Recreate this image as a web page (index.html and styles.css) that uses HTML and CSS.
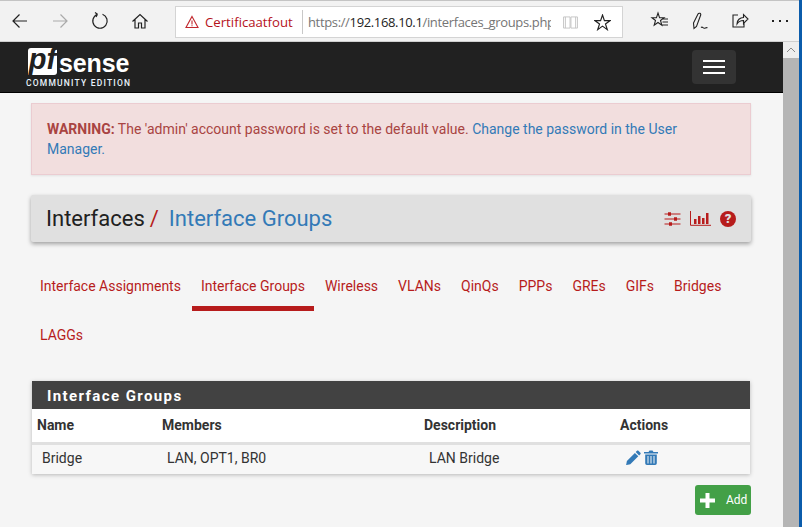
FILE: index.html
```html
<!DOCTYPE html>
<html lang="en">
<head>
  <meta charset="UTF-8" />
  <title>pfSense - Interfaces: Interface Groups</title>
  <link rel="stylesheet" href="styles.css">
</head>
<body>
  <div class="window">
    <div class="browser">
      <div class="toolbar">
        <div class="nav-icons">
          <svg class="tb-icon" viewBox="0 0 20 20"><path d="M17 10H3M9.500 3.500 3 10l6.500 6.500" fill="none" stroke="#222" stroke-width="1.200"/></svg>
          <svg class="tb-icon" viewBox="0 0 20 20"><path d="M3 10h14M10.500 3.500 17 10l-6.500 6.500" fill="none" stroke="#aaa" stroke-width="1.200"/></svg>
          <svg class="tb-icon" viewBox="0 0 20 20"><path d="M12.500 3.300a7.200 7.200 0 1 1-5 0M7.500 3.300 5 1.500M7.500 3.300 6 6" fill="none" stroke="#222" stroke-width="1.200"/></svg>
          <svg class="tb-icon" viewBox="0 0 20 20"><path d="M2.500 10.500 10 3.500l7.500 7M5 8.500V17h3.500v-5h3v5H15V8.500" fill="none" stroke="#222" stroke-width="1.200"/></svg>
        </div>
        <div class="address">
          <div class="cert">
            <svg class="cert-icon" viewBox="0 0 14 14"><path d="M7 1.500 13 12.500H1ZM7 5.500v4M7 10.300v1" fill="none" stroke="#c1272d" stroke-width="1.100"/></svg>
            <span>Certificaatfout</span>
          </div>
          <div class="url"><span class="url-dim">https://</span>192.168.10.1<span class="url-dim">/interfaces_groups.php</span></div>
          <svg class="book" viewBox="0 0 16 14"><path d="M.5 1h7v12h-7ZM8.500 1h7v12h-7ZM2.500 1v12M13.500 1v12" fill="none" stroke="#c4c4c4"/></svg>
          <svg class="star" viewBox="0 0 16 16"><path d="m8 1 1.800 5.200h5.400l-4.400 3.200 1.700 5.300L8 11.400l-4.500 3.300 1.700-5.300L.8 6.200h5.400Z" fill="none" stroke="#222" stroke-width="1.100"/></svg>
        </div>
        <div class="tool-icons">
          <svg class="tb-icon" viewBox="0 0 20 20"><path d="m8 2 1.600 4.800H14l-3.500 2.700 1.300 4.700L8 11.500l-3.800 2.700 1.300-4.700L2 6.800h4.400ZM12 8h6M12.500 11h5.500M12 14h6" fill="none" stroke="#222" stroke-width="1.100"/></svg>
          <svg class="tb-icon" viewBox="0 0 20 20"><path d="M3.500 12 8 3c.8-1.500 3.300-.6 2.700 1L6.500 15.500l-2.500 2ZM11 16.500c1.500-1.500 2 .8 3.200.8s1.500-1 3.300-.6" fill="none" stroke="#222" stroke-width="1.100"/></svg>
          <svg class="tb-icon" viewBox="0 0 20 20"><path d="M8 4H3v12h11v-4M7 13c0-4 3-6.500 6.500-6.500V3.500L18 8l-4.500 4.500v-3C11 9.500 8.500 10.500 7 13Z" fill="none" stroke="#222" stroke-width="1.100"/></svg>
          <div class="more"><i></i><i></i><i></i></div>
        </div>
      </div>
    </div>

    <div class="viewport">
      <div class="page">
        <nav class="navbar">
          <div class="logo">
            <div class="logo-top">
              <span class="logo-pf">pf</span><span class="logo-sense">sense</span>
            </div>
            <div class="logo-sub">COMMUNITY EDITION</div>
          </div>
          <button class="burger"><i></i><i></i><i></i></button>
        </nav>

        <main class="content">
          <div class="alert">
            <strong>WARNING:</strong> The 'admin' account password is set to the default value. <a href="#">Change the password in the User Manager.</a>
          </div>

          <div class="crumbs">
            <h1><span class="crumb-root">Interfaces</span><span class="crumb-sep">/</span><a href="#">Interface Groups</a></h1>
            <div class="crumb-icons">
              <svg class="ci-sliders" viewBox="0 0 16 14"><path d="M0 2h16M0 7h16M0 12h16" stroke="#b71c1c" stroke-width="1.200"/><path d="M3.500 .3h3v3.400h-3ZM9.500 5.300h3v3.400h-3ZM4.500 10.300h3v3.400h-3Z" fill="#b71c1c"/></svg>
              <svg class="ci-chart" viewBox="0 0 21 15"><path d="M.5 0v14.300H21" fill="none" stroke="#b71c1c"/><path d="M4 8h2.500v5H4ZM8 5h2.500v8H8ZM12 7h2.500v6H12ZM16 2h2.500v11H16Z" fill="#b71c1c"/></svg>
              <span class="ci-help">?</span>
            </div>
          </div>

          <ul class="tabs">
            <li><a href="#">Interface Assignments</a></li>
            <li class="active"><a href="#">Interface Groups</a></li>
            <li><a href="#">Wireless</a></li>
            <li><a href="#">VLANs</a></li>
            <li><a href="#">QinQs</a></li>
            <li><a href="#">PPPs</a></li>
            <li><a href="#">GREs</a></li>
            <li><a href="#">GIFs</a></li>
            <li><a href="#">Bridges</a></li>
            <li><a href="#">LAGGs</a></li>
          </ul>

          <section class="panel">
            <h2>Interface Groups</h2>
            <table>
              <thead>
                <tr><th class="col-name">Name</th><th class="col-members">Members</th><th class="col-desc">Description</th><th>Actions</th></tr>
              </thead>
              <tbody>
                <tr>
                  <td>Bridge</td>
                  <td>LAN, OPT1, BR0</td>
                  <td>LAN Bridge</td>
                  <td class="actions">
                    <svg class="act-icon" viewBox="0 0 15 15"><path d="M11 .8c.5-.4 1-.4 1.400 0l2 2c.4.400.4 1 0 1.400l-1.300 1.300-3.400-3.400ZM8.900 2.900l3.400 3.400-8 8-4.200.8.800-4.200Z" fill="#337ab7"/></svg>
                    <svg class="act-icon" viewBox="0 0 14 15"><path d="M4.500 2 5.500.5h3L9.500 2H14v1.500H0V2ZM1.200 4.500h11.600V13c0 1.200-.7 2-1.700 2H2.900c-1 0-1.700-.8-1.700-2ZM3.500 6v7.500h1V6ZM6.500 6v7.500h1V6ZM9.500 6v7.500h1V6Z" fill="#337ab7" fill-rule="evenodd"/></svg>
                  </td>
                </tr>
              </tbody>
            </table>
          </section>

          <div class="panel-foot">
            <button class="btn-add">
              <svg class="plus" viewBox="0 0 15 15"><path d="M5.500 0h4v5.500H15v4H9.500V15h-4V9.500H0v-4h5.500Z" fill="#fff"/></svg>
              Add
            </button>
          </div>
        </main>
      </div>

      <div class="scrollbar"><div class="scroll-up"><svg viewBox="0 0 10 6"><path d="M1 5 5 1l4 4" fill="none" stroke="#888"/></svg></div></div>
    </div>
  </div>
  <div class="desktop-edge"></div>
</body>
</html>
```

FILE: styles.css
```css
* { margin: 0; padding: 0; box-sizing: border-box; }

html, body { height: 100%; overflow: hidden; }

body {
  display: flex;
  font-family: 'Roboto', sans-serif;
  font-size: 14px;
  line-height: 20px;
  color: #212121;
  background: #0b5cab;
}

a { color: #337ab7; text-decoration: none; }

.window {
  width: 799px;
  height: 527px;
  display: flex;
  flex-direction: column;
  flex-shrink: 0;
}

.desktop-edge { flex: 1; background: #0b5cab; }

/* browser chrome */
.browser {
  height: 42px;
  background: #f2f2f2;
  border-top: 1px solid #c4c4c4;
  border-bottom: 1px solid #cfcfcf;
  flex-shrink: 0;
}

.toolbar {
  height: 40px;
  display: flex;
  align-items: center;
}

.nav-icons {
  width: 175px;
  padding-left: 10px;
  display: flex;
  gap: 20px;
  flex-shrink: 0;
}

.tb-icon { width: 20px; height: 20px; display: block; }

.address {
  width: 448px;
  height: 32px;
  margin-top: 2px;
  background: #fff;
  border: 1px solid #d4d4d4;
  display: flex;
  align-items: center;
  font-family: 'Open Sans', sans-serif;
  flex-shrink: 0;
}

.cert {
  height: 24px;
  width: 127px;
  padding-left: 9px;
  display: flex;
  align-items: center;
  gap: 6px;
  color: #b5121b;
  font-size: 13.200px;
  border-right: 1px solid #c8c8c8;
  flex-shrink: 0;
}

.cert-icon { width: 14px; height: 14px; }

.url {
  width: 243px;
  margin-left: 5px;
  overflow: hidden;
  white-space: nowrap;
  font-size: 13px;
  letter-spacing: -.35px;
  color: #222;
  flex-shrink: 0;
}

.url-dim { color: #757575; }

.book { width: 15px; height: 13px; margin-left: 12px; }
.star { width: 17px; height: 17px; margin-left: 16px; }

.tool-icons {
  padding-left: 27px;
  display: flex;
  align-items: center;
  gap: 20px;
  flex-shrink: 0;
}

.more { display: flex; gap: 5px; margin-left: 2px; }
.more i { width: 2px; height: 2px; background: #222; display: block; }

/* page area */
.viewport { flex: 1; display: flex; min-height: 0; }

.page { flex: 1; background: #f5f5f5; min-width: 0; }

.scrollbar { width: 16px; background: #b5b5b5; flex-shrink: 0; }

.scroll-up {
  height: 16px;
  background: #eee;
  display: flex;
  align-items: center;
  justify-content: center;
}

.scroll-up svg { width: 10px; height: 6px; }

.navbar {
  height: 51px;
  background: #212121;
  border-bottom: 1px solid #000;
  display: flex;
  align-items: center;
  justify-content: space-between;
  padding: 0 47px 0 26px;
}

.logo { color: #fff; display: flex; flex-direction: column; padding-top: 2px; }

.logo-top { display: flex; align-items: center; height: 27px; padding-left: 2px; }

.logo-pf {
  width: 29px;
  height: 27px;
  background: #fff;
  color: #212121;
  font-family: 'Liberation Sans', sans-serif;
  font-style: italic;
  font-weight: bold;
  font-size: 29px;
  line-height: 22px;
  text-align: center;
  border-radius: 3px 0 3px 0;
}

.logo-sense {
  font-family: 'Liberation Sans', sans-serif;
  font-weight: bold;
  font-size: 25px;
  line-height: 27px;
  letter-spacing: -.1px;
  margin-left: 2px;
  padding-top: 4px;
}

.logo-sub {
  font-size: 8.500px;
  line-height: 10px;
  font-weight: 500;
  letter-spacing: 1.200px;
  color: #e8f2fb;
  white-space: nowrap;
  margin-top: 3px;
}

.burger {
  width: 44px;
  height: 34px;
  background: #333;
  border: none;
  border-radius: 4px;
  display: flex;
  flex-direction: column;
  align-items: center;
  justify-content: center;
  gap: 4px;
}

.burger i { width: 22px; height: 2px; background: #fff; display: block; }

.content { padding: 10px 32px 0 31px; }

.alert {
  height: 72px;
  padding: 15px 15px;
  background: #f2dede;
  border: 1px solid #ebccd1;
  color: #a94442;
  line-height: 20px;
  margin-bottom: 20px;
  box-shadow: 0 1px 2px rgba(0,0,0,.08);
}

.alert strong { font-weight: 700; }

.crumbs {
  height: 47px;
  background: #e0e0e0;
  border-radius: 2px;
  box-shadow: 0 2px 4px rgba(0,0,0,.35);
  display: flex;
  align-items: center;
  justify-content: space-between;
  padding: 0 15px;
}

.crumbs h1 {
  font-size: 22px;
  font-weight: 400;
  line-height: 47px;
  white-space: nowrap;
}

.crumb-sep { color: #b71c1c; margin: 0 10px 0 5px; }

.crumb-icons { display: flex; align-items: center; }

.ci-sliders { width: 17px; height: 14px; margin-right: 9px; }
.ci-chart { width: 21px; height: 15px; margin-right: 9px; }

.ci-help {
  width: 16px;
  height: 16px;
  border-radius: 50%;
  background: #b71c1c;
  color: #e0e0e0;
  font-weight: 900;
  font-size: 13px;
  line-height: 16px;
  text-align: center;
}

.tabs {
  list-style: none;
  display: flex;
  flex-wrap: wrap;
  margin-top: 21px;
}

.tabs li { height: 49px; margin-right: 2px; }

.tabs a {
  display: block;
  height: 48px;
  line-height: 46px;
  padding: 0 9px;
  color: #b71c1c;
  white-space: nowrap;
}

.tabs li.active a { border-bottom: 5px solid #b71c1c; }

.panel {
  margin: 20px 1px 0;
  background: #fff;
  box-shadow: 0 1px 4px rgba(0,0,0,.25);
}

.panel h2 {
  height: 28px;
  background: #424242;
  color: #fff;
  font-size: 15px;
  font-weight: 700;
  line-height: 30px;
  letter-spacing: 1.400px;
  padding-left: 15px;
}

table { width: 100%; border-collapse: collapse; }

th {
  height: 34px;
  text-align: left;
  padding: 0 0 0 5px;
  font-weight: 700;
  color: #333;
  border-bottom: 3px solid #e0e0e0;
}

td {
  height: 31px;
  padding: 0 0 2px 10px;
  background: #f7f7f7;
  color: #333;
}

.col-name { width: 125px; }
.col-members { width: 262px; }
.col-desc { width: 196px; }

td.actions { padding-left: 11px; }

.act-icon { width: 15px; height: 15px; display: inline-block; vertical-align: middle; margin-top: -5px; }
.act-icon + .act-icon { width: 14px; margin-left: 0; }

.panel-foot { display: flex; justify-content: flex-end; margin-top: 11px; }

.btn-add {
  width: 56px;
  height: 30px;
  background: #43a047;
  border: none;
  border-radius: 3px;
  color: #fff;
  font-family: inherit;
  font-size: 12px;
  display: flex;
  align-items: center;
  gap: 11px;
  padding-left: 5px;
}

.plus { width: 15px; height: 15px; }
```
